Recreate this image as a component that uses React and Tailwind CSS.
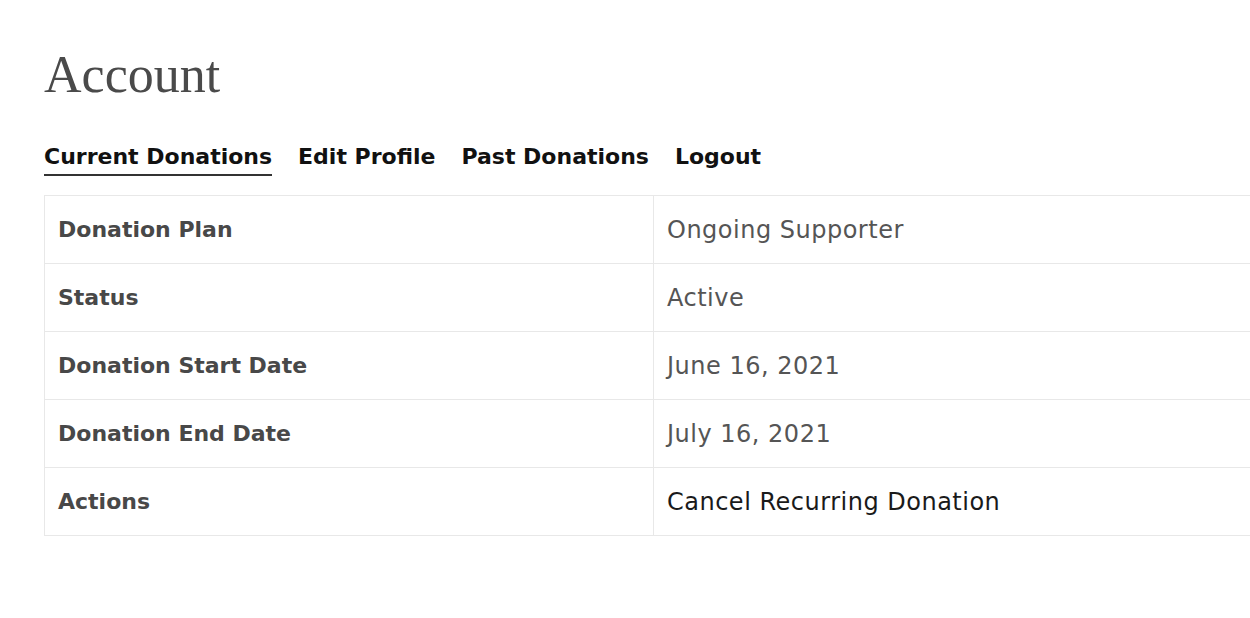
const rows = [
  ['Donation Plan', 'Ongoing Supporter', 'text-[#555]'],
  ['Status', 'Active', 'text-[#555]'],
  ['Donation Start Date', 'June 16, 2021', 'text-[#555]'],
  ['Donation End Date', 'July 16, 2021', 'text-[#555]'],
  ['Actions', 'Cancel Recurring Donation', 'text-[#1a1a1a]'],
];

export default function App() {
  return (
    <div className="min-h-screen w-[1250px] overflow-hidden bg-white pl-[44px] pt-[45px] font-['DejaVu_Sans',sans-serif]">
      {/* Title */}
      <h1 className="font-['Liberation_Serif',serif] text-[52px] leading-[60px] text-[#4a4a4a]">Account</h1>

      {/* Tabs */}
      <nav className="mt-[37px] flex gap-[26px] text-[22px] font-bold text-[#111]">
        <a className="border-b-2 border-[#333] pb-[2px] leading-[30px]">Current Donations</a>
        <a className="leading-[30px]">Edit Profile</a>
        <a className="leading-[30px]">Past Donations</a>
        <a className="leading-[30px]">Logout</a>
      </nav>

      {/* Details table */}
      <div className="mt-[19px] w-[1260px] border-l border-t border-[#e8e8e8]">
        {rows.map(([label, value, color]) => (
          <div key={label} className="grid h-[68px] grid-cols-[608px_1fr] border-b border-[#e8e8e8]">
            <div className="flex items-center pl-[13px] text-[22px] font-bold text-[#484848]">{label}</div>
            <div className={`flex items-center border-l border-[#e8e8e8] pl-[13px] text-[24px] tracking-[0.5px] ${color}`}>{value}</div>
          </div>
        ))}
      </div>
    </div>
  );
}
